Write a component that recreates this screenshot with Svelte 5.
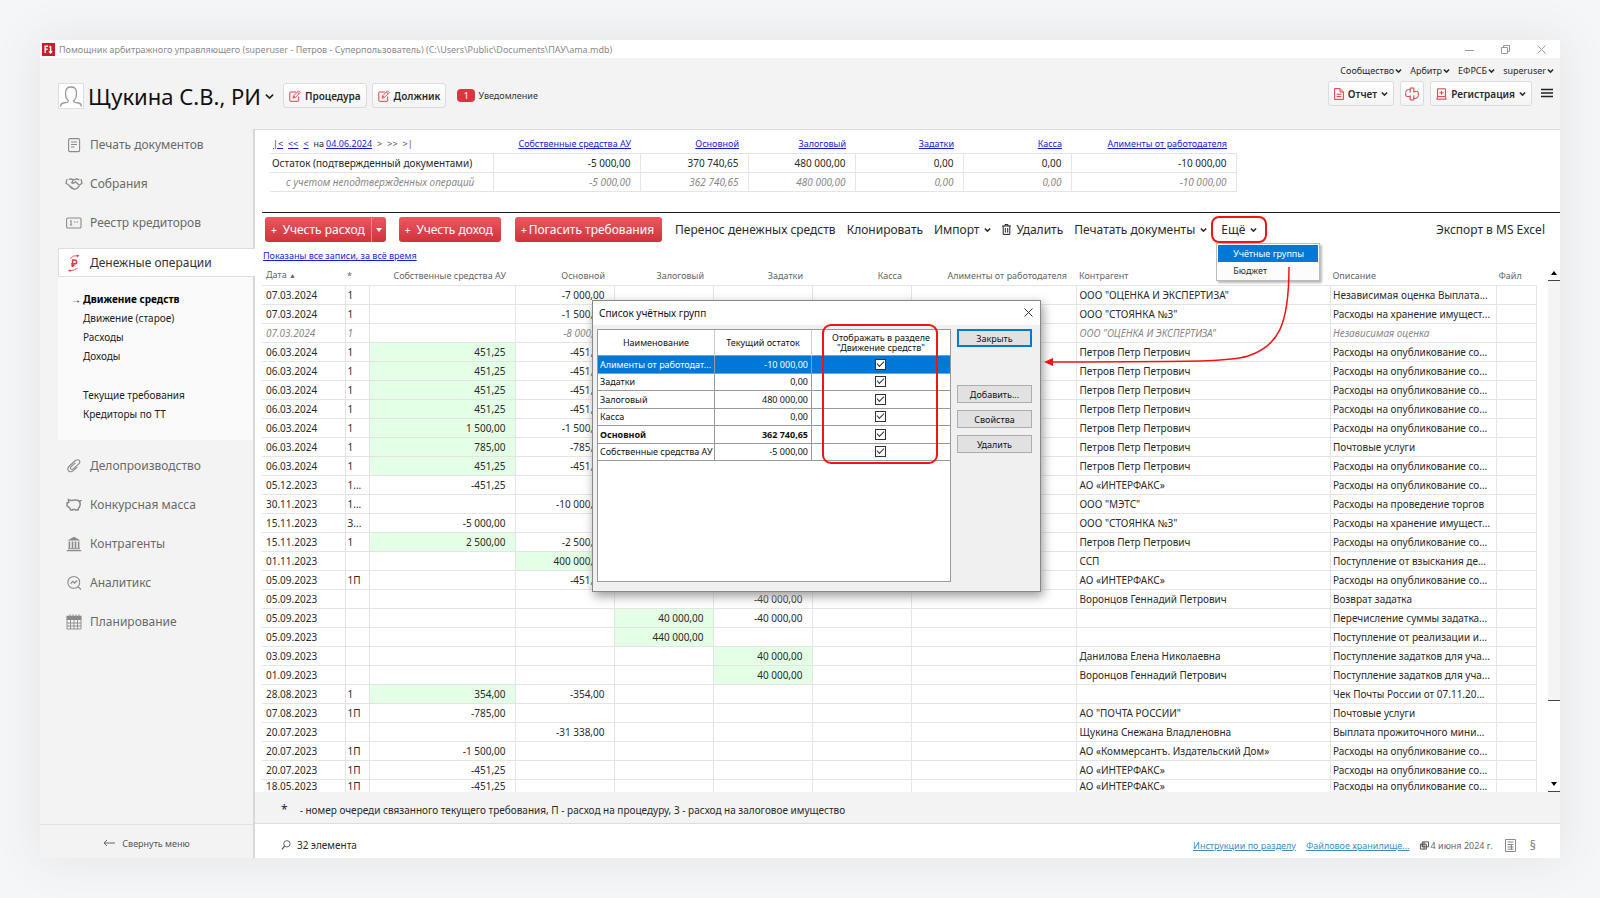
<script lang="ts">
  type Row = {
    date: string;
    mark?: string;
    sums: Record<number, string>;
    agent?: string;
    note: string;
    draft?: boolean;
  };

  const PUB = 'Расходы на опубликование со...';
  const PETROV = 'Петров Петр Петрович';
  const INTERFAX = 'АО «ИНТЕРФАКС»';

  const accounts = ['Собственные средства АУ', 'Основной', 'Залоговый', 'Задатки', 'Касса', 'Алименты от работодателя'];
  const confirmed = ['-5 000,00', '370 740,65', '480 000,00', '0,00', '0,00', '-10 000,00'];
  const expected = ['-5 000,00', '362 740,65', '480 000,00', '0,00', '0,00', '-10 000,00'];

  // sums are keyed by the account's index in `accounts`
  const rows: Row[] = [
    { date: '07.03.2024', mark: '1', sums: { 1: '-7 000,00' }, agent: 'ООО "ОЦЕНКА И ЭКСПЕРТИЗА"', note: 'Независимая оценка Выплата...' },
    { date: '07.03.2024', mark: '1', sums: { 1: '-1 500,00' }, agent: 'ООО "СТОЯНКА №3"', note: 'Расходы на хранение имущест...' },
    { date: '07.03.2024', mark: '1', sums: { 1: '-8 000,00' }, agent: 'ООО "ОЦЕНКА И ЭКСПЕРТИЗА"', note: 'Независимая оценка', draft: true },
    { date: '06.03.2024', mark: '1', sums: { 0: '451,25', 1: '-451,25' }, agent: PETROV, note: PUB },
    { date: '06.03.2024', mark: '1', sums: { 0: '451,25', 1: '-451,25' }, agent: PETROV, note: PUB },
    { date: '06.03.2024', mark: '1', sums: { 0: '451,25', 1: '-451,25' }, agent: PETROV, note: PUB },
    { date: '06.03.2024', mark: '1', sums: { 0: '451,25', 1: '-451,25' }, agent: PETROV, note: PUB },
    { date: '06.03.2024', mark: '1', sums: { 0: '1 500,00', 1: '-1 500,00' }, agent: PETROV, note: PUB },
    { date: '06.03.2024', mark: '1', sums: { 0: '785,00', 1: '-785,00' }, agent: PETROV, note: 'Почтовые услуги' },
    { date: '06.03.2024', mark: '1', sums: { 0: '451,25', 1: '-451,25' }, agent: PETROV, note: PUB },
    { date: '05.12.2023', mark: '1...', sums: { 0: '-451,25' }, agent: INTERFAX, note: PUB },
    { date: '30.11.2023', mark: '1...', sums: { 1: '-10 000,00' }, agent: 'ООО "МЭТС"', note: 'Расходы на проведение торгов' },
    { date: '15.11.2023', mark: 'З...', sums: { 0: '-5 000,00' }, agent: 'ООО "СТОЯНКА №3"', note: 'Расходы на хранение имущест...' },
    { date: '15.11.2023', mark: '1', sums: { 0: '2 500,00', 1: '-2 500,00' }, agent: PETROV, note: PUB },
    { date: '01.11.2023', sums: { 1: '400 000,00' }, agent: 'ССП', note: 'Поступление от взыскания де...' },
    { date: '05.09.2023', mark: '1П', sums: { 1: '-451,25' }, agent: INTERFAX, note: PUB },
    { date: '05.09.2023', sums: { 3: '-40 000,00' }, agent: 'Воронцов Геннадий Петрович', note: 'Возврат задатка' },
    { date: '05.09.2023', sums: { 2: '40 000,00', 3: '-40 000,00' }, note: 'Перечисление суммы задатка...' },
    { date: '05.09.2023', sums: { 2: '440 000,00' }, note: 'Поступление от реализации и...' },
    { date: '03.09.2023', sums: { 3: '40 000,00' }, agent: 'Данилова Елена Николаевна', note: 'Поступление задатков для уча...' },
    { date: '01.09.2023', sums: { 3: '40 000,00' }, agent: 'Воронцов Геннадий Петрович', note: 'Поступление задатков для уча...' },
    { date: '28.08.2023', mark: '1', sums: { 0: '354,00', 1: '-354,00' }, note: 'Чек Почты России от 07.11.20...' },
    { date: '07.08.2023', mark: '1П', sums: { 0: '-785,00' }, agent: 'АО "ПОЧТА РОССИИ"', note: 'Почтовые услуги' },
    { date: '20.07.2023', sums: { 1: '-31 338,00' }, agent: 'Щукина Снежана Владленовна', note: 'Выплата прожиточного мини...' },
    { date: '20.07.2023', mark: '1П', sums: { 0: '-1 500,00' }, agent: 'АО «Коммерсантъ. Издательский Дом»', note: PUB },
    { date: '20.07.2023', mark: '1П', sums: { 0: '-451,25' }, agent: INTERFAX, note: PUB },
    { date: '18.05.2023', mark: '1П', sums: { 0: '-451,25' }, agent: INTERFAX, note: PUB }
  ];

  let groups = $state([
    { name: 'Алименты от работодат...', rest: '-10 000,00', shown: true },
    { name: 'Задатки', rest: '0,00', shown: true },
    { name: 'Залоговый', rest: '480 000,00', shown: true },
    { name: 'Касса', rest: '0,00', shown: true },
    { name: 'Основной', rest: '362 740,65', shown: true, main: true },
    { name: 'Собственные средства АУ', rest: '-5 000,00', shown: true }
  ]);
  let selected = $state(0);
  let dialogOpen = $state(true);

  const isIncome = (s?: string) => !!s && !s.startsWith('-');
</script>

{#snippet chevron()}
  <svg viewBox="0 0 8 6" width="7" height="6"><path d="M1 1.3 4 4.3 7 1.3" fill="none" stroke="currentColor" stroke-width="1.7" /></svg>
{/snippet}

{#snippet pencil()}
  <svg viewBox="0 0 12 12" width="12" height="12" fill="none" stroke="#dc3c46">
    <path d="M7 2H1.5Q.8 2 .8 2.7V10.6Q.8 11.3 1.5 11.3H9Q9.7 11.3 9.7 10.6V6.5" />
    <path d="M4 8.2 4.6 5.8 9.6.8 11.3 2.5 6.3 7.5ZM8.4 2 10.1 3.7M4.6 5.8 6.3 7.5" stroke-width=".9" />
  </svg>
{/snippet}

{#snippet icon(name: string)}
  <svg viewBox="0 0 16 16" width="16" height="16" fill="none" stroke="#8a8a8a" stroke-width="1.1">
    {#if name === 'doc'}
      <rect x="2.6" y="1.6" width="11" height="13" rx="1.3" />
      <path d="M5 5H11M5 7.5H11M5 10H8.5" stroke-width="1" />
    {:else if name === 'hands'}
      <path d="M1 3.2 0 7.2 2.6 9M15 3.2 16 7.2 13.6 9" stroke-width="1.3" />
      <path d="M2.8 3.4Q5.4 2.4 7.4 4L10 3Q12 3 13.4 4M7.4 4 5.6 6.8Q7.6 8 9.4 5.8L13.6 9.4M2.8 9 5.4 12 8.2 13.4Q11 13.2 13.4 9.8M4.6 10.6 8 13.2" stroke-width="1.3" />
    {:else if name === 'card'}
      <rect x=".6" y="3" width="14.4" height="10" rx="1.3" />
      <path d="M4 6.2 5 5.8V10M3.8 10H6.2M8 7H9.6M10.6 7H12.2" />
    {:else if name === 'ruble'}
      <g stroke="#dc3c46">
        <path d="M6.6 12V5H8.4Q10.6 5 10.6 6.900 10.6 8.800 8.4 8.800H5.200M5.200 10.500H8.600" stroke-width="1.500" />
        <path d="M3.800 3.800Q7 0 11.600.6M3.400 15.800Q8.600 16 11.600 13" stroke-width=".8" />
        <path d="M10.600-.6 13.400.6 11 2.400ZM4.600 14.200 1.800 15.600 4.600 16.800Z" fill="#dc3c46" stroke="none" />
      </g>
    {:else if name === 'clip'}
      <path d="M9.4 4.8 5.2 8.6Q3.8 10 5 11 6.1 11.8 7.6 10.6L12.6 6.2Q14.8 4 13.2 2.4 11.6 1 9.2 2.8L3.4 8Q.6 10.8 2.6 13 4.8 14.8 7.6 12.4L11.2 9.2" />
    {:else if name === 'pig'}
      <path d="M2.4 2.6 5.4 3.4Q8.6 2.6 11.6 3.2Q14.4 4.4 14.2 7.4 14 9.6 12.6 11L12 13H9.6L9 12.4H7L6.6 13H4.6L3.8 11 1 8.8V6L2.8 5.2ZM13 4.2 15.6 3.4" stroke-width="1.5" />
    {:else if name === 'bank'}
      <path d="M8 .8 14.6 4.6H1.4Z" fill="#8a8a8a" stroke="none" />
      <path d="M3.4 5.6V12.4M6.5 5.6V12.4M9.5 5.6V12.4M12.6 5.6V12.4" stroke-width="1.6" />
      <path d="M2 12.8H14M.8 14.6H15.2" />
    {:else if name === 'lens'}
      <circle cx="7.8" cy="7.4" r="5.9" />
      <path d="M12 11.6 15 14.6M4.6 8.6 6.8 6.4 8.4 8 11.2 5.4" stroke-width="1.3" />
    {:else if name === 'calendar'}
      <path d="M1 2.4H15V5.4H1Z" fill="#8a8a8a" />
      <path d="M4 .4V3M7 .4V3M10 .4V3M13 .4V3M1 5.6V15H15V5.6M1 9H15M1 12H15M4.5 6V15M8 6V15M11.5 6V15" stroke-width=".9" />
    {/if}
  </svg>
{/snippet}

{#snippet navItem(name: string, label: string)}
  <li><a class="nav" href="#{name}">{@render icon(name)}<span>{label}</span></a></li>
{/snippet}

<div class="window">
  <div class="titlebar">
    <svg viewBox="0 0 13 13" width="13" height="13">
      <rect width="13" height="13" fill="#c81e28" />
      <path d="M3.2 10V3.2H6M3.2 6.3H5.6M8.6 3V9.4M7 8.2 8.6 10 10.2 8.2M7.4 4.4 8.6 3" fill="none" stroke="#fff" stroke-width="1.4" />
    </svg>
    <span>Помощник арбитражного управляющего (superuser - Петров - Суперпользователь) (C:\Users\Public\Documents\ПАУ\ama.mdb)</span>
    <div class="winbuttons">
      <button aria-label="Свернуть"><svg width="9" height="9"><path d="M0 5.5H9" stroke="#999" /></svg></button>
      <button aria-label="Развернуть"><svg width="9" height="9" fill="none" stroke="#999"><path d="M.5 2.5H6.5V8.5H.5ZM2.5 2.5V.5H8.5V6.5H6.5" /></svg></button>
      <button aria-label="Закрыть окно"><svg width="9" height="9"><path d="M.5.5 8.5 8.5M8.5.5.5 8.5" stroke="#999" /></svg></button>
    </div>
  </div>

  <header>
    <div class="person">
      <div class="avatar">
        <svg viewBox="0 0 24 24" width="24" height="24" fill="none" stroke="#999" stroke-width="1.3">
          <path d="M1.6 22.6Q1.4 19.6 4.4 19L8 18.4Q9.6 18 9.2 16.4 6.6 14.4 6.6 11V8Q6.8 3 12 3T17.4 8V11Q17.4 14.4 14.8 16.4 14.4 18 16 18.4L19.6 19Q22.6 19.6 22.4 22.6" />
        </svg>
      </div>
      <h1>Щукина С.В., РИ</h1>
      <svg viewBox="0 0 10 7" width="9" height="7"><path d="M1 1.4 5 5.2 9 1.4" fill="none" stroke="#222" stroke-width="1.8" /></svg>
    </div>
    <button class="btn">{@render pencil()}Процедура</button>
    <button class="btn">{@render pencil()}Должник</button>
    <a class="notice" href="#notice"><b>1</b>Уведомление</a>

    <div class="account">
      <div class="menus">
        <button>Сообщество{@render chevron()}</button>
        <button>Арбитр{@render chevron()}</button>
        <button>ЕФРСБ{@render chevron()}</button>
        <button>superuser{@render chevron()}</button>
      </div>
      <div class="actions">
        <button class="btn">
          <svg viewBox="0 0 10 12" width="10" height="12" fill="none" stroke="#dc3c46"><path d="M.6.6H6L9.4 4V11.4H.6ZM6 .6V4H9.4M2.6 6.2H7.4M2.6 8.6H7.4" /></svg>
          Отчет{@render chevron()}
        </button>
        <button class="btn square" aria-label="Сверка">
          <svg viewBox="0 0 14 14" width="14" height="14" fill="none" stroke="#dc3c46"><path d="M5.200 9.600H2.200Q.7 9.600.7 8V5.400Q.7 2.600 3.400 2.600H5.200M8.800 4.400H11.800Q13.300 4.400 13.300 6V8.600Q13.300 11.400 10.600 11.400H8.800M5.200 5.600V1H8.800V5.600M5.200 8.400V13H8.800V8.400" /></svg>
        </button>
        <button class="btn">
          <svg viewBox="0 0 11 12" width="11" height="12" fill="none" stroke="#dc3c46"><path d="M1.6.8H9.4V8.6H1.6ZM1.6 8.6.8 11.2H10.2L9.4 8.6M5.5 2.8V6.8M3.5 4.8H7.5" /></svg>
          Регистрация{@render chevron()}
        </button>
        <button class="burger" aria-label="Меню"><svg width="12" height="10"><path d="M0 1.5H12M0 5H12M0 8.5H12" stroke="#222" stroke-width="1.6" /></svg></button>
      </div>
    </div>
  </header>

  <div class="columns">
    <nav class="sidebar">
      <ul>
        {@render navItem('doc', 'Печать документов')}
        {@render navItem('hands', 'Собрания')}
        {@render navItem('card', 'Реестр кредиторов')}
        <li class="current">
          <a class="nav" href="#ruble">{@render icon('ruble')}<span>Денежные операции</span></a>
          <ul class="sub">
            <li><a class="here" href="#flow">Движение средств</a></li>
            <li><a href="#flow-old">Движение (старое)</a></li>
            <li><a href="#costs">Расходы</a></li>
            <li><a href="#income">Доходы</a></li>
            <li class="apart"><a href="#claims">Текущие требования</a></li>
            <li><a href="#creditors">Кредиторы по ТТ</a></li>
          </ul>
        </li>
        {@render navItem('clip', 'Делопроизводство')}
        {@render navItem('pig', 'Конкурсная масса')}
        {@render navItem('bank', 'Контрагенты')}
        {@render navItem('lens', 'Аналитикс')}
        {@render navItem('calendar', 'Планирование')}
      </ul>
      <button class="collapse"><svg viewBox="0 0 12 8" width="12" height="8"><path d="M12 4H1M4 1 1 4 4 7" fill="none" stroke="#666" /></svg>Свернуть меню</button>
    </nav>

    <main>
      <table class="summary">
        <thead>
          <tr>
            <th class="period">
              <a href="#first">|&lt;</a><a href="#prev-year">&lt;&lt;</a><a href="#prev">&lt;</a><span>на</span><a href="#day">04.06.2024</a><span class="off">&gt;</span><span class="off">&gt;&gt;</span><span class="off">&gt;|</span>
            </th>
            {#each accounts as a}
              <th><a href="#account">{a}</a></th>
            {/each}
          </tr>
        </thead>
        <tbody>
          <tr>
            <td>Остаток (подтвержденный документами)</td>
            {#each confirmed as v}<td>{v}</td>{/each}
          </tr>
          <tr class="draft">
            <td>с учетом неподтвержденных операций</td>
            {#each expected as v}<td>{v}</td>{/each}
          </tr>
        </tbody>
      </table>

      <div class="toolbar">
        <div class="split">
          <button class="red"><i>+</i>Учесть расход</button>
          <button class="red drop" aria-label="Ещё варианты расхода"><svg width="6" height="4"><path d="M0 0H6L3 4Z" fill="#fff" /></svg></button>
        </div>
        <button class="red"><i>+</i>Учесть доход</button>
        <button class="red claims"><i>+</i>Погасить требования</button>
        <button>Перенос денежных средств</button>
        <button>Клонировать</button>
        <button>Импорт{@render chevron()}</button>
        <button>
          <svg viewBox="0 0 9 11" width="9" height="11" fill="none" stroke="#222"><path d="M0 2H9M3 2V.6H6V2M1.2 2V10.4H7.8V2M3.3 4V8.6M5.7 4V8.6" /></svg>
          Удалить
        </button>
        <button>Печатать документы{@render chevron()}</button>
        <div class="more">
          <button class="ringed">Ещё{@render chevron()}</button>
          <div class="menu">
            <button class="active">Учётные группы</button>
            <button>Бюджет</button>
          </div>
        </div>
        <button class="export">Экспорт в MS Excel</button>
      </div>

      <a class="filter" href="#filter">Показаны все записи, за всё время</a>

      <div class="grid">
        <table class="moves">
          <colgroup>
            <col class="w-date" /><col class="w-mark" /><col class="w-own" />
            <col class="w-sum" /><col class="w-sum" /><col class="w-sum" /><col class="w-sum" />
            <col class="w-alimony" /><col /><col class="w-note" /><col class="w-file" />
          </colgroup>
          <thead>
            <tr>
              <th>Дата <small>▲</small></th>
              <th>*</th>
              {#each accounts as a}<th class="num">{a}</th>{/each}
              <th>Контрагент</th>
              <th>Описание</th>
              <th>Файл</th>
            </tr>
          </thead>
          <tbody>
            {#each rows as r}
              <tr class:draft={r.draft}>
                <td>{r.date}</td>
                <td>{r.mark ?? ''}</td>
                {#each accounts as _, i}
                  <td class="num" class:income={isIncome(r.sums[i])}>{r.sums[i] ?? ''}</td>
                {/each}
                <td>{r.agent ?? ''}</td>
                <td>{r.note}</td>
                <td></td>
              </tr>
            {/each}
          </tbody>
        </table>
        <div class="scroll">
          <button aria-label="Вверх"><svg width="6" height="4"><path d="M0 4H6L3 0Z" /></svg></button>
          <div class="thumb"></div>
          <div class="track"></div>
          <button aria-label="Вниз"><svg width="6" height="4"><path d="M0 0H6L3 4Z" /></svg></button>
        </div>
      </div>

      <p class="legend"><b>*</b>- номер очереди связанного текущего требования, П - расход на процедуру, З - расход на залоговое имущество</p>

      <footer>
        <svg viewBox="0 0 11 11" width="10" height="10" fill="none" stroke="#555"><circle cx="6.5" cy="4.2" r="3.5" /><path d="M4 6.8 1 10.4" stroke-width="1.4" /></svg>
        <span class="count">32 элемента</span>
        <a href="#help">Инструкции по разделу</a>
        <a href="#files">Файловое хранилище...</a>
        <span class="today">
          <svg viewBox="0 0 10 9" width="9" height="9" fill="none" stroke="#444"><path d="M2.5.5H9.5V6H2.5ZM.5 3H7V8.5H.5ZM4.5.5V8.5M2.5 3V6" /></svg>
          4 июня 2024 г.
        </span>
        <svg class="calc" viewBox="0 0 11 13" width="11" height="13" fill="none" stroke="#888"><path d="M.5.5H10.5V12.5H.5ZM2.5 3H8.5M2.5 5.5H8.5M2.5 8H8.5M2.5 10.2H8.5M6.5 5V11" /></svg>
        <span class="par">§</span>
      </footer>
    </main>
  </div>

  {#if dialogOpen}
    <div class="dialog" role="dialog" aria-labelledby="groups-title">
      <div class="caption">
        <h2 id="groups-title">Список учётных групп</h2>
        <button aria-label="Закрыть список" onclick={() => (dialogOpen = false)}><svg width="9" height="9"><path d="M.5.5 8.5 8.5M8.5.5.5 8.5" stroke="#333" /></svg></button>
      </div>
      <div class="content">
        <div class="list">
          <table class="groups">
            <thead>
              <tr><th>Наименование</th><th>Текущий остаток</th><th>Отображать в разделе "Движение средств"</th></tr>
            </thead>
            <tbody>
              {#each groups as g, i}
                <tr class:selected={i === selected} class:main={g.main} onclick={() => (selected = i)}>
                  <td>{g.name}</td>
                  <td>{g.rest}</td>
                  <td><input type="checkbox" bind:checked={g.shown} aria-label={g.name} /></td>
                </tr>
              {/each}
            </tbody>
          </table>
          <div class="mark-column"></div>
        </div>
        <div class="side">
          <button class="default" onclick={() => (dialogOpen = false)}>Закрыть</button>
          <button>Добавить...</button>
          <button>Свойства</button>
          <button>Удалить</button>
        </div>
      </div>
    </div>
  {/if}

  <svg class="pointer" viewBox="0 0 250 104" width="250" height="104">
    <path d="M245 1C245 60 234 80 204 90 180 97 130 95 8 96" fill="none" stroke="#f01414" stroke-width="1.5" />
    <path d="M0 96 9 92V100Z" fill="#f01414" />
  </svg>
</div>

<style>
  :global(body) {
    margin: 0;
    background: #f5f6f8;
    font-family: 'Noto Sans', 'Open Sans', sans-serif;
    font-size: 10px;
    color: #2a2a2a;
  }
  button {
    padding: 0;
    border: 0;
    background: none;
    font: inherit;
    color: inherit;
    white-space: nowrap;
    cursor: pointer;
  }
  ul {
    margin: 0;
    padding: 0;
    list-style: none;
  }
  table {
    border-collapse: collapse;
    table-layout: fixed;
  }
  svg {
    flex: none;
    overflow: visible;
  }
  .window {
    position: relative;
    margin: 40px;
    background: #fff;
    box-shadow: 0 0 44px #e1e3e5;
  }

  .titlebar {
    display: flex;
    align-items: center;
    gap: 4px;
    height: 18px;
    padding-left: 2px;
    font-size: 9px;
    color: #8a8a8a;
  }
  .winbuttons {
    display: flex;
    gap: 27px;
    margin-left: auto;
    padding-right: 14px;
  }
  .winbuttons button {
    display: flex;
  }

  header {
    display: flex;
    align-items: flex-start;
    gap: 5px;
    height: 71px;
    box-sizing: border-box;
    padding: 6px 6px 0 18px;
    background: #f3f3f3;
  }
  .person {
    display: flex;
    align-items: center;
    gap: 4px;
    margin: 18px 4px 0 0;
  }
  .avatar {
    display: flex;
    border: 1px solid #ddd;
    background: #fff;
  }
  h1 {
    margin: 0;
    font-size: 22px;
    font-weight: 400;
    line-height: 28px;
    color: #111;
  }
  .btn {
    display: flex;
    align-items: center;
    gap: 4px;
    height: 25px;
    padding: 0 5px;
    border: 1px solid #dcdcdc;
    border-radius: 3px;
    background: linear-gradient(#fff, #f4f4f4);
    font-weight: 600;
  }
  header > .btn {
    margin-top: 19px;
  }
  .notice {
    display: flex;
    align-items: center;
    gap: 3px;
    margin: 25px 0 0 6px;
    font-size: 9px;
    color: #333;
    text-decoration: none;
  }
  .notice b {
    width: 18px;
    border-radius: 4px;
    background: #d9363f;
    line-height: 13px;
    font-weight: 400;
    text-align: center;
    color: #fff;
  }
  .account {
    margin-left: auto;
  }
  .menus {
    display: flex;
    justify-content: flex-end;
    gap: 8px;
    margin-bottom: 4px;
    font-size: 9px;
    line-height: 13px;
  }
  .menus button {
    display: flex;
    align-items: center;
    gap: 1px;
  }
  .actions {
    display: flex;
    justify-content: flex-end;
    gap: 6px;
  }
  .square {
    padding: 0 4px;
  }
  .burger {
    margin: 0 1px 0 3px;
  }

  .columns {
    display: flex;
  }
  .sidebar {
    display: flex;
    flex: none;
    flex-direction: column;
    justify-content: space-between;
    width: 213px;
    border-right: 2px solid #d8d8d8;
    background: #f3f3f3;
  }
  .sidebar > ul {
    padding-left: 18px;
  }
  .nav {
    display: flex;
    align-items: center;
    gap: 8px;
    height: 39px;
    padding-left: 8px;
    font-size: 12px;
    color: #6a6a6a;
    text-decoration: none;
  }
  .sidebar > ul > li:first-child {
    margin-top: -4px;
  }
  .current {
    margin: 6px 0;
    background: #fafafa;
  }
  .current .nav {
    height: 29px;
    margin-right: -2px;
    box-sizing: border-box;
    padding-left: 7px;
    border: 1px solid #ddd;
    border-right: 0;
    background: #fff;
    color: #333;
  }
  .sub {
    padding: 13px 0 16px 25px;
    line-height: 19px;
  }
  .sub a {
    color: #222;
    text-decoration: none;
  }
  .sub .here {
    font-weight: 700;
    color: #000;
  }
  .here::before {
    content: '→';
    margin-left: -12px;
    margin-right: 2px;
  }
  .apart {
    margin-top: 20px;
  }
  .collapse {
    display: flex;
    align-items: center;
    justify-content: center;
    gap: 7px;
    height: 34px;
    padding-top: 3px;
    box-sizing: border-box;
    border-top: 1px solid #e2e2e2;
    font-size: 9px;
    color: #555;
  }

  main {
    flex: 1;
    min-width: 0;
    border-top: 1px solid #ddd;
  }
  .summary {
    margin: 4px 0 20px 15px;
  }
  .summary th {
    height: 19px;
    width: 99px;
    padding: 0 9px 0 0;
    font-size: 9px;
    font-weight: 400;
    text-align: right;
    white-space: nowrap;
  }
  .summary th:nth-child(2) {
    width: 138px;
  }
  .summary th:nth-child(4) {
    width: 98px;
  }
  .summary th:last-child {
    width: 156px;
  }
  .summary .period {
    width: 220px;
    padding: 0 0 0 3px;
    text-align: left;
  }
  .period a,
  .period span {
    margin-right: 5px;
  }
  .period span:not(.off) {
    margin-right: 2px;
  }
  .off {
    color: #555;
  }
  .summary a,
  .filter {
    color: #1a1ae0;
  }
  .summary td {
    height: 18px;
    padding: 0 9px 0 0;
    border: 1px solid #e4e4e4;
    text-align: right;
    white-space: nowrap;
  }
  .summary td:first-child {
    padding: 0 0 0 2px;
    border-left: 0;
    text-align: left;
  }
  .summary .draft td:first-child {
    padding-left: 16px;
  }
  .draft {
    font-style: italic;
    color: #888;
  }

  .toolbar {
    display: flex;
    align-items: center;
    gap: 11px;
    height: 33px;
    margin-left: 7px;
    padding: 0 15px 0 3px;
    border-top: 1px solid #222;
    font-size: 12px;
  }
  .toolbar button {
    display: flex;
    align-items: center;
    gap: 5px;
  }
  .toolbar .red {
    gap: 6px;
    height: 25px;
    margin-right: 3px;
    padding: 0 8px 0 6px;
    border-radius: 3px;
    background: linear-gradient(#ea5860, #d0333c);
    color: #fff;
  }
  .toolbar i {
    font-style: normal;
    font-size: 10px;
  }
  .split {
    display: flex;
  }
  .split .red:first-child {
    margin: 0;
    padding-right: 6px;
    border-radius: 3px 0 0 3px;
  }
  .split .drop {
    margin-right: 2px;
    padding: 0 4px;
    border-left: 1px solid #f0898f;
    border-radius: 0 3px 3px 0;
  }
  .toolbar .claims {
    gap: 2px;
    margin-right: 2px;
  }
  .more {
    position: relative;
    margin-left: -7px;
  }
  .toolbar .ringed {
    height: 27px;
    padding: 0 8px;
    border: 2px solid #f01414;
    border-radius: 8px;
    box-sizing: border-box;
  }
  .menu {
    position: absolute;
    top: 27px;
    left: 5px;
    z-index: 2;
    width: 100px;
    padding: 1px;
    border: 1px solid #bbb;
    background: #fcfcfc;
    box-shadow: 2px 2px 2px #bbb;
    font-size: 9px;
  }
  .toolbar .menu button {
    width: 100%;
    height: 17px;
    padding-left: 15px;
  }
  .menu .active {
    background: #0078d7;
    color: #fff;
  }
  .export {
    margin-left: auto;
  }

  .filter {
    display: block;
    margin-left: 8px;
    font-size: 9px;
    line-height: 20px;
  }
  .grid {
    display: flex;
    padding-left: 7px;
  }
  .moves {
    flex: 1;
    width: 0;
  }
  .w-date { width: 83px; }
  .w-mark { width: 24px; }
  .w-own { width: 146px; }
  .w-sum { width: 99px; }
  .w-alimony { width: 165px; }
  .w-note { width: 166px; }
  .w-file { width: 40px; }
  .moves th,
  .moves td {
    height: 18px;
    padding: 0 2px;
    border: 1px solid #e4e4e4;
    border-top: 0;
    line-height: 14px;
    text-align: left;
    white-space: nowrap;
    overflow: hidden;
  }
  .moves tr > :first-child {
    padding-left: 4px;
    border-left: 0;
  }
  .moves tr > :nth-child(9) {
    padding-left: 3px;
  }
  .moves th {
    height: 19px;
    border-left: 0;
    border-right: 0;
    font-size: 9px;
    font-weight: 400;
    color: #666;
  }
  .moves small {
    font-size: 7px;
  }
  .moves .num {
    padding-right: 9px;
    text-align: right;
  }
  .moves .income {
    background: #e3ffe6;
  }
  .moves tr:last-child td {
    height: 12px;
    border-bottom: 0;
    line-height: 12px;
  }
  .scroll {
    display: flex;
    flex: none;
    flex-direction: column;
    width: 12px;
    margin-left: 11px;
  }
  .scroll button {
    display: flex;
    align-items: center;
    justify-content: center;
    height: 15px;
    border-bottom: 1px solid #444;
  }
  .thumb {
    flex: 11;
    border-bottom: 1px solid #444;
    background: #f4f4f4;
  }
  .track {
    flex: 2;
  }

  .legend {
    display: flex;
    align-items: center;
    gap: 12px;
    height: 32px;
    margin: 0;
    padding: 4px 0 0 26px;
    box-sizing: border-box;
    border-bottom: 1px solid #ddd;
    background: #f3f3f3;
  }
  .legend b {
    font-weight: 400;
    font-size: 12px;
  }
  footer {
    display: flex;
    align-items: center;
    gap: 10px;
    height: 34px;
    padding: 8px 24px 0 26px;
    box-sizing: border-box;
  }
  footer a {
    font-size: 9px;
    color: #3a8fc4;
  }
  .count {
    margin-left: -4px;
    margin-right: auto;
  }
  .today {
    display: flex;
    align-items: center;
    gap: 2px;
    font-size: 9px;
    color: #666;
  }
  .calc {
    margin: 0 4px 0 2px;
  }
  .par {
    font-size: 12px;
    color: #777;
  }

  .dialog {
    position: absolute;
    top: 260px;
    left: 552px;
    z-index: 3;
    width: 447px;
    border: 1px solid #888;
    background: #f0f0f0;
    box-shadow: 2px 4px 10px #999;
    font-size: 9px;
    color: #111;
  }
  .caption {
    display: flex;
    align-items: center;
    justify-content: space-between;
    height: 24px;
    padding: 0 7px 0 6px;
    background: #fff;
  }
  h2 {
    margin: 0;
    font-size: 10px;
    font-weight: 400;
  }
  .content {
    display: flex;
    gap: 6px;
    padding: 4px 8px 9px 4px;
  }
  .list {
    position: relative;
    flex: 1;
    height: 251px;
    border: 1px solid #999;
    background: #fff;
  }
  .groups {
    width: 100%;
    height: 131px;
  }
  .groups th {
    height: 25px;
    padding: 0 10px;
    border-right: 1px solid #ccc;
    font-weight: 400;
    line-height: 10px;
  }
  .groups th:first-child { width: 96px; }
  .groups th:nth-child(2) { width: 76px; }
  .groups th:last-child { border-right: 0; }
  .groups td {
    padding: 0 3px 0 2px;
    border: 1px solid #999;
    border-left: 0;
    white-space: nowrap;
    overflow: hidden;
  }
  .groups td:nth-child(2) {
    text-align: right;
  }
  .groups td:last-child {
    border-right: 0;
  }
  .selected td {
    background: #0078d7;
    color: #fff;
  }
  .main {
    font-weight: 700;
  }
  .groups input {
    appearance: none;
    position: relative;
    display: block;
    width: 11px;
    height: 11px;
    box-sizing: border-box;
    margin: 0 0 0 61px;
    border: 1px solid #333;
    background: #fff;
  }
  .groups input:checked::before {
    content: '';
    position: absolute;
    top: 1px;
    left: 1px;
    width: 6px;
    height: 3px;
    border: solid #333;
    border-width: 0 0 1px 1px;
    transform: rotate(-45deg);
  }
  .mark-column {
    position: absolute;
    top: -6px;
    right: 12px;
    width: 112px;
    height: 136px;
    border: 2px solid #f01414;
    border-radius: 9px;
    pointer-events: none;
  }
  .side {
    display: flex;
    flex-direction: column;
    gap: 7px;
    width: 75px;
  }
  .side button {
    height: 18px;
    box-sizing: border-box;
    border: 1px solid #adadad;
    background: #e1e1e1;
  }
  .side .default {
    margin-bottom: 31px;
    border: 2px solid #0078d7;
  }
  .pointer {
    position: absolute;
    top: 226px;
    left: 1004px;
    z-index: 4;
    pointer-events: none;
  }
</style>
